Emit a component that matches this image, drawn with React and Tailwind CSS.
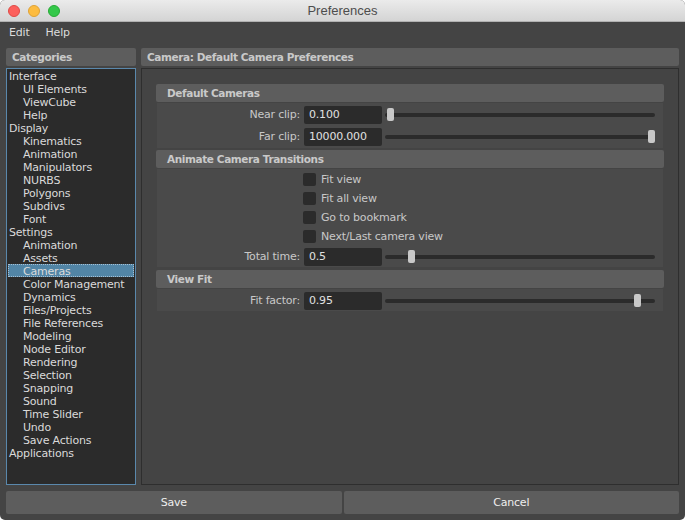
import React from 'react';

const categories = [
  { label: 'Interface', top: true },
  { label: 'UI Elements' },
  { label: 'ViewCube' },
  { label: 'Help' },
  { label: 'Display', top: true },
  { label: 'Kinematics' },
  { label: 'Animation' },
  { label: 'Manipulators' },
  { label: 'NURBS' },
  { label: 'Polygons' },
  { label: 'Subdivs' },
  { label: 'Font' },
  { label: 'Settings', top: true },
  { label: 'Animation' },
  { label: 'Assets' },
  { label: 'Cameras', selected: true },
  { label: 'Color Management' },
  { label: 'Dynamics' },
  { label: 'Files/Projects' },
  { label: 'File References' },
  { label: 'Modeling' },
  { label: 'Node Editor' },
  { label: 'Rendering' },
  { label: 'Selection' },
  { label: 'Snapping' },
  { label: 'Sound' },
  { label: 'Time Slider' },
  { label: 'Undo' },
  { label: 'Save Actions' },
  { label: 'Applications', top: true },
];

// panel title bars (Categories, Camera..., section headers)
const Bar = ({ children, pad = 'pl-[6px]' }) => (
  <div
    className={`h-[18px] rounded-[2px] bg-[#5d5d5d] ${pad} pt-[1px] flex items-center font-bold text-[10.5px] tracking-[-0.4px] text-[#c9c9c9] whitespace-nowrap`}
  >
    {children}
  </div>
);

const Slider = ({ thumb }) => (
  <div className="relative ml-[3px] w-[270px] h-[18px] flex items-center">
    <div className="w-full h-[4px] rounded-full bg-[#2b2b2b]" />
    <div
      className="absolute top-[2px] w-[7px] h-[13px] rounded-[2px] bg-[#c8c8c8]"
      style={{ left: thumb }}
    />
  </div>
);

const FieldRow = ({ label, value, thumb }) => (
  <div className="flex items-center h-[18px]">
    <div className="w-[147px] text-right pr-[4px] pt-[1px] text-[#c8c8c8]">{label}</div>
    <div className="w-[78px] h-[18px] rounded-[2px] bg-[#2b2b2b] pl-[5px] pt-[1px] flex items-center text-[#e0e0e0]">
      {value}
    </div>
    <Slider thumb={thumb} />
  </div>
);

const CheckRow = ({ label }) => (
  <div className="flex items-center h-[19px]">
    <div className="w-[146px]" />
    <div className="w-[13px] h-[13px] rounded-[2px] bg-[#2b2b2b]" />
    <span className="ml-[5px] pt-[1px] text-[#c8c8c8]">{label}</span>
  </div>
);

const TrafficLight = ({ className }) => (
  <div className={`w-[12px] h-[12px] rounded-full border ${className}`} />
);

export default function App() {
  return (
    <div className="w-[685px] h-[520px] bg-white">
      <div className="w-full h-full rounded-[5px] overflow-hidden bg-[#444444] flex flex-col font-['DejaVu_Sans',sans-serif] text-[11px] tracking-[-0.2px]">
        <div className="relative h-[22px] shrink-0 bg-gradient-to-b from-[#ebebeb] to-[#d4d4d4] border-b border-[#b1b1b1] flex items-center justify-center">
          <div className="absolute left-[8px] top-[5px] flex gap-[8px]">
            <TrafficLight className="bg-[#fc605c] border-[#de4a46]" />
            <TrafficLight className="bg-[#fdbc40] border-[#dea236]" />
            <TrafficLight className="bg-[#34c84a] border-[#27aa35]" />
          </div>
          <span className="font-['Liberation_Sans',sans-serif] text-[13px] tracking-normal text-[#4d4d4d]">
            Preferences
          </span>
        </div>

        <div className="h-[20px] shrink-0 flex items-center gap-[16px] pl-[9px] pt-[2px] text-[#dcdcdc]">
          <span>Edit</span>
          <span>Help</span>
        </div>

        <div className="flex-1 min-h-0 flex gap-[5px] px-[6px] pt-[6px]">
          <div className="w-[130px] flex flex-col">
            <Bar>Categories</Bar>
            <div className="mt-[2px] flex-1 bg-[#2b2b2b] border border-[#5a88ac] px-[1px]">
              {categories.map((c, i) => (
                <div
                  key={i}
                  className={`h-[13px] leading-[15px] whitespace-nowrap text-[#dadada] ${
                    c.top ? 'pl-[1px]' : 'pl-[15px]'
                  } ${c.selected ? 'bg-[#5285a6] outline outline-1 outline-dotted outline-[#a7c0d4] -outline-offset-1' : ''}`}
                >
                  {c.label}
                </div>
              ))}
            </div>
          </div>

          <div className="flex-1 flex flex-col">
            <Bar>Camera: Default Camera Preferences</Bar>
            <div className="mt-[2px] flex-1 border border-[#2e2e2e] px-[14px] pt-[15px]">
              <Bar pad="pl-[11px]">Default Cameras</Bar>
              <div className="mt-[1px] mx-[1px] bg-[#4a4a4a] pt-[3px] pb-[2px] flex flex-col gap-[4px]">
                <FieldRow label="Near clip:" value="0.100" thumb={2} />
                <FieldRow label="Far clip:" value="10000.000" thumb={263} />
              </div>

              <div className="mt-[2px]">
                <Bar pad="pl-[11px]">Animate Camera Transitions</Bar>
              </div>
              <div className="mt-[1px] mx-[1px] bg-[#4a4a4a] pt-[1px] pb-[1px]">
                <CheckRow label="Fit view" />
                <CheckRow label="Fit all view" />
                <CheckRow label="Go to bookmark" />
                <CheckRow label="Next/Last camera view" />
                <div className="mt-[2px]">
                  <FieldRow label="Total time:" value="0.5" thumb={23} />
                </div>
              </div>

              <div className="mt-[3px]">
                <Bar pad="pl-[11px]">View Fit</Bar>
              </div>
              <div className="mt-[1px] mx-[1px] bg-[#4a4a4a] pt-[3px] pb-[1px]">
                <FieldRow label="Fit factor:" value="0.95" thumb={249} />
              </div>
            </div>
          </div>
        </div>

        <div className="shrink-0 grid grid-cols-2 gap-[2px] px-[6px] pt-[6px] pb-[6px]">
          <button className="h-[23px] pt-[2px] rounded-[2px] bg-[#5d5d5d] text-[#eeeeee]">Save</button>
          <button className="h-[23px] pt-[2px] rounded-[2px] bg-[#5d5d5d] text-[#eeeeee]">Cancel</button>
        </div>
      </div>
    </div>
  );
}
